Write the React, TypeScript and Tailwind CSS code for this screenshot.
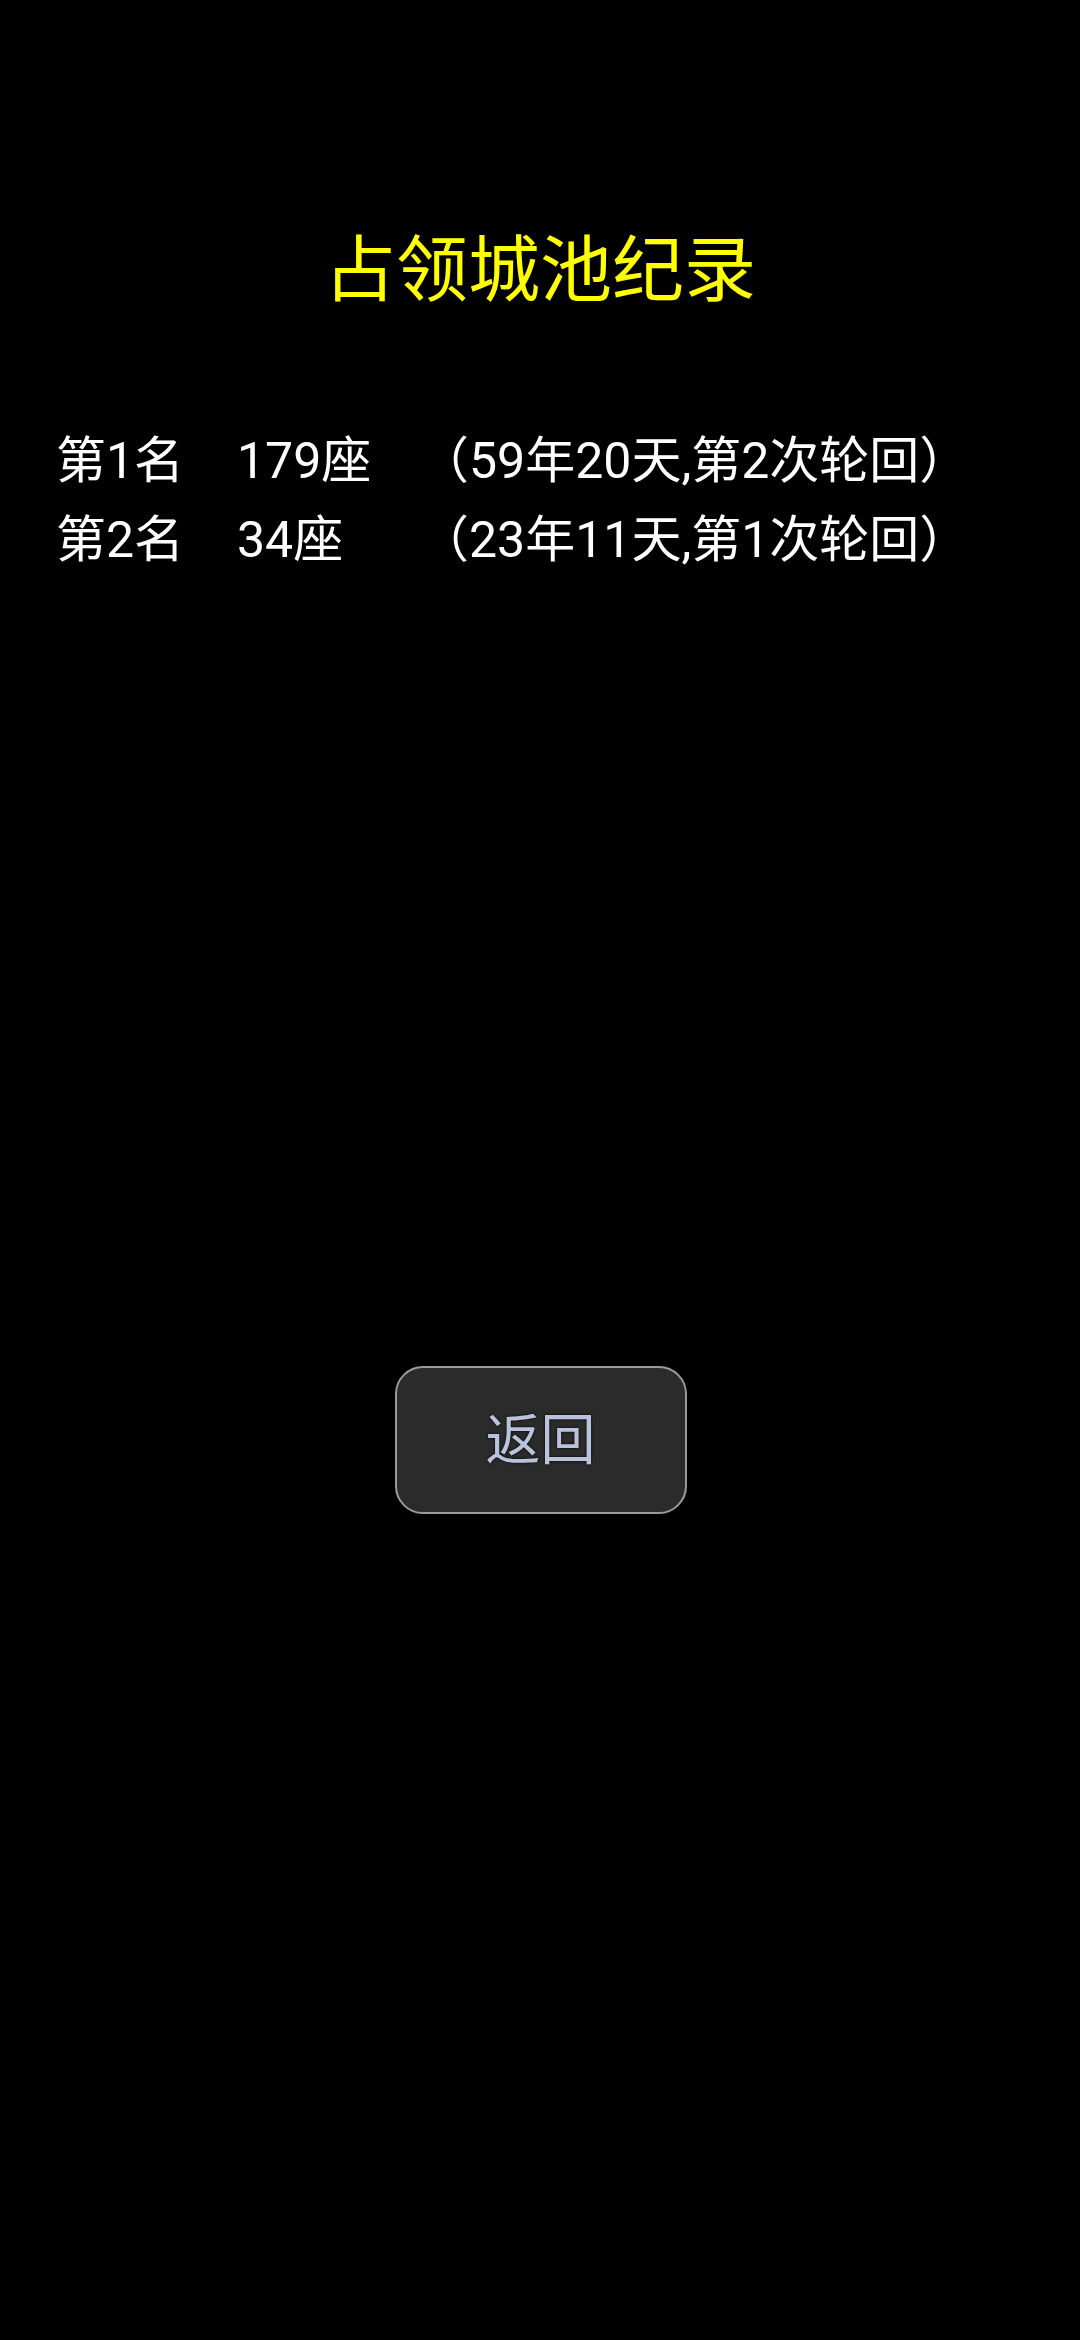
import React from 'react';

interface Record {
  rank: string;
  count: string;
  detail: string;
}

const records: Record[] = [
  { rank: '第1名', count: '179座', detail: '（59年20天,第2次轮回）' },
  { rank: '第2名', count: '34座', detail: '（23年11天,第1次轮回）' },
];

const App: React.FC = () => {
  return (
    <div
      className="w-[1080px] h-[2340px] bg-black flex flex-col"
      style={{ fontFamily: 'Roboto, "Noto Sans CJK SC", sans-serif' }}
    >
      {/* Title */}
      <div className="pt-[221px] h-[100px] box-content text-center text-[72px] leading-[100px] text-[#ffff00]">
        占领城池纪录
      </div>

      {/* Records */}
      <div className="mt-[101px] flex flex-col pl-[56px]">
        {records.map((r) => (
          <div key={r.rank} className="flex h-[79px] text-[50px] leading-[79px] text-white">
            <span className="w-[181px] shrink-0">{r.rank}</span>
            <span className="w-[182px] shrink-0">{r.count}</span>
            <span className="whitespace-nowrap">{r.detail}</span>
          </div>
        ))}
      </div>

      {/* Back button */}
      <div className="mt-[786px] flex justify-center">
        <button className="w-[292px] h-[148px] ml-[1px] rounded-[28px] border-2 border-[#9a9a9a] bg-[#2b2b2b] text-[55px] text-[#bac3dc] flex items-center justify-center [text-shadow:0_0_3px_#000]">
          返回
        </button>
      </div>
    </div>
  );
};

export default App;
